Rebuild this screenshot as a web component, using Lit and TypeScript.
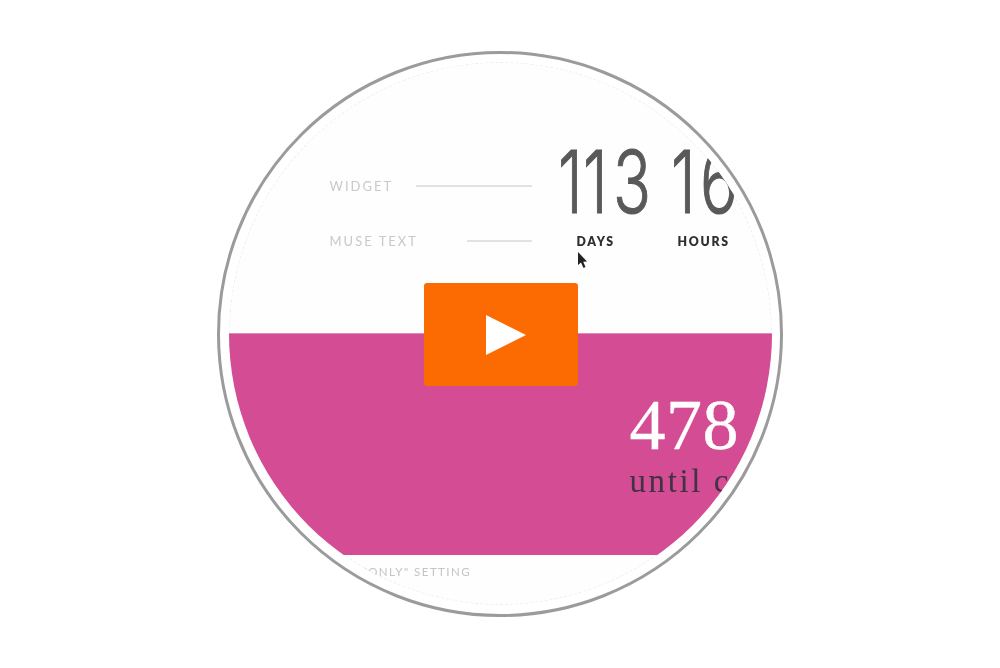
import { LitElement, html, css } from "lit";
import { customElement } from "lit/decorators.js";

@customElement("app-root")
export class AppRoot extends LitElement {
  static styles = css`
    :host { display: block; width: 1000px; height: 668px; background: #fff; overflow: hidden; }
    .page { height: 668px; display: flex; justify-content: center; padding-top: 51px; box-sizing: border-box; }
    .ring {
      width: 566px; height: 566px; box-sizing: border-box; border: 3px solid #9b9b9b; border-radius: 50%;
      display: flex; align-items: center; justify-content: center; position: relative;
    }
    .disc {
      width: 543px; height: 543px; border-radius: 50%; overflow: hidden; background: #fefefe; margin-top: -1px;
      display: flex; flex-direction: column; position: relative;
    }
    .top { height: 271px; flex: none; padding: 84px 0 0 101px; box-sizing: border-box; filter: blur(0.35px); position: relative; }
    .row { display: flex; align-items: center; }
    .row.nums { height: 72px; }
    .row.names { height: 24px; margin-top: 11px; }
    .legend { width: 202px; flex: none; display: flex; align-items: center; justify-content: space-between; margin-top: 8px; }
    .names .legend { margin-top: 0; }
    .legend span {
      font: 400 13px "Lato", sans-serif; letter-spacing: 2px; color: #c9c9c9; white-space: nowrap;
    }
    .line { height: 2px; background: #e2e2e2; }
    .line.long { width: 116px; }
    .line.short { width: 65px; }
    .digits {
      margin-left: 30px; display: flex; align-items: center; height: 72px; color: #595959;
      font: 300 87px/72px "Inter", sans-serif; white-space: nowrap;
      -webkit-text-stroke: 1.1px #595959;
    }
    .d { display: block; transform-origin: 0 50%; }
    .d1 { width: 29px; transform: scaleX(0.72); margin-left: -4px; }
    .d1b { width: 30px; transform: scaleX(0.72); margin-left: -4px; }
    .d3 { width: 62px; transform: scaleX(0.72); }
    .d6 { transform: scaleX(0.72); }
    .name { font: 800 12.3px "Lato", sans-serif; letter-spacing: 1.7px; color: #2f2f2f; }
    .days { margin-left: 45px; width: 101px; flex: none; }
    .pink {
      height: 222px; flex: none; background: #d44c94; border-top: 1px solid #e08cb8; box-sizing: border-box;
      display: flex; flex-direction: column; padding: 55px 0 0 401px; position: relative;
    }
    .big { font: 400 72px/72px "Liberation Serif", serif; letter-spacing: 0.5px; color: #fff; -webkit-text-stroke: 0.4px #fff; filter: blur(0.3px); }
    .until { font: 400 33px/36px "Liberation Serif", serif; letter-spacing: 2.6px; color: #3f3344; white-space: nowrap; margin-top: 2px; filter: blur(0.3px); }
    .bottom { flex: 1; padding: 7px 0 0 134px; filter: blur(0.3px); position: relative; }
    .bottom span { font: 400 11.5px "Lato", sans-serif; letter-spacing: 1.45px; color: #c4c4c4; white-space: nowrap; }
    .cursor { position: absolute; left: 348px; top: 190px; width: 12px; height: 18px; filter: blur(0.4px); }
    .play {
      position: absolute; left: 204px; top: 229px; width: 154px; height: 103px; border-radius: 3px;
      background: #fc6a02; display: flex; align-items: center; justify-content: center; border: 0; padding: 0 0 0 9px;
    }
    .play svg { width: 40px; height: 40px; display: block; }
    .dash {
      position: absolute; left: 0; top: 0; width: 100%; height: 100%; box-sizing: border-box;
      border: 1px dashed #ececec; border-radius: 50%; pointer-events: none;
    }
  `;

  render() {
    return html`
      <div class="page">
        <div class="ring">
          <div class="disc">
            <div class="dash"></div>
            <div class="top">
              <div class="row nums">
                <div class="legend"><span>WIDGET</span><div class="line long"></div></div>
                <div class="digits">
                  <span class="d d1">1</span><span class="d d1b">1</span><span class="d d3">3</span><span class="d d1">1</span><span class="d d6">6</span>
                </div>
              </div>
              <div class="row names">
                <div class="legend"><span>MUSE TEXT</span><div class="line short"></div></div>
                <span class="name days">DAYS</span><span class="name">HOURS</span>
              </div>
            </div>
            <div class="pink">
              <div class="big">478</div>
              <div class="until">until c</div>
            </div>
            <div class="bottom"><span>"ONLY" SETTING</span></div>
            <svg class="cursor" viewBox="0 0 12 18"><path d="M1 0 L1 13 L4 10.5 L6.5 16 L8.5 15 L6.2 9.8 L10 9.5 Z" fill="#222"/></svg>
          </div>
          <button class="play" aria-label="Play">
            <svg viewBox="0 0 40 40"><path d="M0 0 L40 20 L0 40 Z" fill="#fff"/></svg>
          </button>
        </div>
      </div>
    `;
  }
}
